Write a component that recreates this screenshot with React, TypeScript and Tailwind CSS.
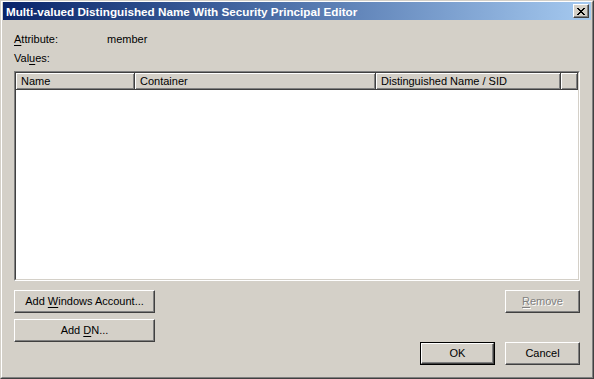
import { ReactNode } from "react";

// classic win2000 dialog colours
// face #d4d0c8, shadow #808080, dark #404040

const font = { fontFamily: '"Liberation Sans", Arial, sans-serif' };

const WinButton = ({
  children,
  width,
  isDefault,
  disabled,
}: {
  children: ReactNode;
  width: string;
  isDefault?: boolean;
  disabled?: boolean;
}) => {
  if (isDefault) {
    return (
      <div className={`${width} h-[23px] border border-black`}>
        <div className="w-full h-full border-t border-l border-white border-r border-b border-r-[#404040] border-b-[#404040] shadow-[inset_-1px_-1px_0_#808080] flex items-center justify-center text-[11px] leading-[13px] text-black">
          <span>{children}</span>
        </div>
      </div>
    );
  }
  return (
    <div
      className={`${width} h-[23px] border-t border-l border-white border-r border-b border-r-[#404040] border-b-[#404040] shadow-[inset_-1px_-1px_0_#808080] flex items-center justify-center text-[11px] leading-[13px] ${
        disabled ? "text-[#808080] [text-shadow:1px_1px_0_#fff]" : "text-black"
      }`}
    >
      <span className="whitespace-pre">{children}</span>
    </div>
  );
};

const HeaderCell = ({ text, width }: { text: string; width: string }) => (
  <div
    className={`${width} shrink-0 h-[17px] border-r border-b border-[#404040] shadow-[inset_1px_1px_0_#fff,inset_-1px_-1px_0_#808080] pl-[5px] pt-[2px] text-[11px] leading-[13px] text-black whitespace-nowrap overflow-hidden`}
  >
    {text}
  </div>
);

export default function App() {
  return (
    <div
      style={font}
      className="w-[594px] h-[379px] bg-[#d4d0c8] border border-t-[#d4d0c8] border-l-[#d4d0c8] border-r-[#404040] border-b-[#404040]"
    >
      <div className="w-full h-full border border-t-white border-l-white border-r-[#808080] border-b-[#808080] px-px pb-px flex flex-col">
        {/* title bar */}
        <div className="h-[18px] shrink-0 bg-gradient-to-r from-[#0a246a] to-[#a6caf0] flex items-center justify-between pl-[3px] pr-[2px]">
          <span className="text-white font-bold text-[11.7px] leading-[13px] whitespace-nowrap">
            Multi-valued Distinguished Name With Security Principal Editor
          </span>
          <div className="w-[16px] h-[14px] bg-[#d4d0c8] border-t border-l border-white border-r border-b border-r-[#404040] border-b-[#404040] shadow-[inset_-1px_-1px_0_#808080] flex items-center justify-center">
            <svg width="8" height="7" viewBox="0 0 8 7" shapeRendering="crispEdges">
              <path
                d="M0 0h2v1h-2zM6 0h2v1h-2zM1 1h2v1h-2zM5 1h2v1h-2zM2 2h4v1h-4zM3 3h2v1h-2zM2 4h4v1h-4zM1 5h2v1h-2zM5 5h2v1h-2zM0 6h2v1h-2zM6 6h2v1h-2z"
                fill="#000"
              />
            </svg>
          </div>
        </div>

        {/* body */}
        <div className="flex-1 flex flex-col px-[11px] text-[11px] leading-[13px] text-black">
          <div className="flex mt-[13px]">
            <span className="w-[93px]">
              <span className="underline underline-offset-2">A</span>ttribute:
            </span>
            <span>member</span>
          </div>
          <div className="mt-[6px]">
            Val<span className="underline underline-offset-2">u</span>es:
          </div>

          {/* list view */}
          <div className="mt-[6px] h-[210px] border border-t-[#808080] border-l-[#808080] border-r-white border-b-white">
            <div className="w-full h-full border border-t-[#404040] border-l-[#404040] border-r-[#d4d0c8] border-b-[#d4d0c8] bg-white">
              <div className="flex bg-[#d4d0c8]">
                <HeaderCell text="Name" width="w-[119px]" />
                <HeaderCell text="Container" width="w-[241px]" />
                <HeaderCell text="Distinguished Name / SID" width="w-[185px]" />
                <div className="flex-1 h-[17px] border-r border-b border-[#404040] shadow-[inset_1px_1px_0_#fff,inset_-1px_-1px_0_#808080]" />
              </div>
            </div>
          </div>

          {/* buttons */}
          <div className="flex justify-between mt-[9px]">
            <div className="flex flex-col gap-[6px]">
              <WinButton width="w-[141px]">
                Add <span className="underline underline-offset-2">W</span>indows Account...
              </WinButton>
              <WinButton width="w-[141px]">
                Add <span className="underline underline-offset-2">D</span>N...
              </WinButton>
            </div>
            <div className="flex flex-col items-end">
              <WinButton width="w-[75px]" disabled>
                <span className="underline underline-offset-2">R</span>emove
              </WinButton>
              <div className="flex gap-[10px] mt-[29px]">
                <WinButton width="w-[75px]" isDefault>
                  OK
                </WinButton>
                <WinButton width="w-[75px]">Cancel</WinButton>
              </div>
            </div>
          </div>
        </div>
      </div>
    </div>
  );
}
